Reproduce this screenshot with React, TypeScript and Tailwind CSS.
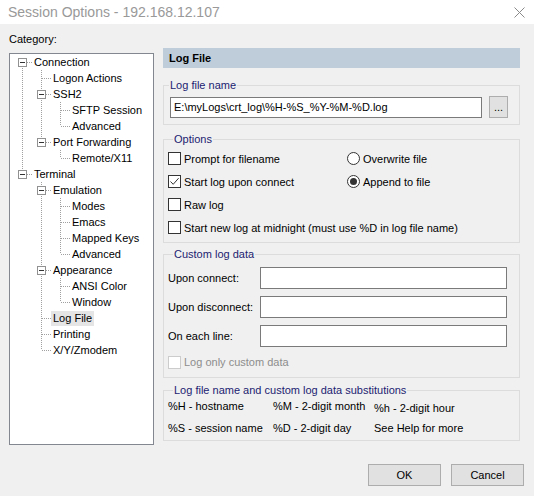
import React from 'react';

type TreeNode = {
  label: string;
  children?: TreeNode[];
  selected?: boolean;
};

const tree: TreeNode[] = [
  {
    label: 'Connection',
    children: [
      { label: 'Logon Actions' },
      { label: 'SSH2', children: [{ label: 'SFTP Session' }, { label: 'Advanced' }] },
      { label: 'Port Forwarding', children: [{ label: 'Remote/X11' }] },
    ],
  },
  {
    label: 'Terminal',
    children: [
      {
        label: 'Emulation',
        children: [{ label: 'Modes' }, { label: 'Emacs' }, { label: 'Mapped Keys' }, { label: 'Advanced' }],
      },
      { label: 'Appearance', children: [{ label: 'ANSI Color' }, { label: 'Window' }] },
      { label: 'Log File', selected: true },
      { label: 'Printing' },
      { label: 'X/Y/Zmodem' },
    ],
  },
];

type Row = {
  node: TreeNode;
  guides: boolean[];
  isFirst: boolean;
  isLast: boolean;
  isRoot: boolean;
};

const flatten = (nodes: TreeNode[], guides: boolean[], rows: Row[]) => {
  nodes.forEach((node, i) => {
    const isLast = i === nodes.length - 1;
    rows.push({ node, guides, isFirst: i === 0, isLast, isRoot: guides.length === 0 });
    if (node.children) flatten(node.children, [...guides, !isLast], rows);
  });
  return rows;
};

const DOT = '#a0a0a0';

// vertical guide for an ancestor that still has siblings below
const Guide = ({ on }: { on: boolean }) => (
  <svg width="19" height="16" className="shrink-0">
    {on && <line x1="9.5" y1="0" x2="9.5" y2="16" stroke={DOT} strokeDasharray="1 1" />}
  </svg>
);

const Connector = ({ row }: { row: Row }) => {
  const hasKids = !!row.node.children;
  const top = row.isRoot && row.isFirst ? 8 : 0;
  const bottom = row.isLast ? 8 : 16;
  return (
    <svg width="19" height="16" className="shrink-0">
      <line x1="9.5" y1={top} x2="9.5" y2={bottom} stroke={DOT} strokeDasharray="1 1" />
      <line x1={hasKids ? 14 : 10} y1="8.5" x2="19" y2="8.5" stroke={DOT} strokeDasharray="1 1" />
      {hasKids && (
        <>
          <rect x="5.5" y="4.5" width="8" height="8" fill="#fff" stroke="#919191" />
          <line x1="7" y1="8.5" x2="12" y2="8.5" stroke="#333" />
        </>
      )}
    </svg>
  );
};

const Tree = () => {
  const rows = flatten(tree, [], []);
  return (
    <div className="mt-[6px] h-[392px] border border-[#828790] bg-white pl-[3px]">
      {rows.map((row, i) => (
        <div key={i} className="flex h-4 items-center">
          {row.guides.map((g, j) => (
            <Guide key={j} on={g} />
          ))}
          <Connector row={row} />
          <span
            className={`px-[2px] leading-[15px] whitespace-nowrap ${row.node.selected ? 'bg-[#e5e5e5]' : ''}`}
          >
            {row.node.label}
          </span>
        </div>
      ))}
    </div>
  );
};

const Group = ({
  title,
  className,
  children,
}: {
  title: string;
  className: string;
  children: React.ReactNode;
}) => (
  <div className={`border border-[#dcdcdc] ${className}`}>
    <div className="-mt-[9px] ml-[5px] w-fit bg-[#f0f0f0] px-[1px] leading-[16px] whitespace-nowrap text-[#1c1c70]">
      {title}
    </div>
    {children}
  </div>
);

const Checkbox = ({ checked, disabled, label }: { checked?: boolean; disabled?: boolean; label: string }) => (
  <div className={`flex items-center gap-[3px] ${disabled ? 'text-[#8d8d8d]' : ''}`}>
    <span
      className={`flex h-[13px] w-[13px] shrink-0 items-center justify-center border bg-white ${
        disabled ? 'border-[#cccccc]' : 'border-[#333333]'
      }`}
    >
      {checked && (
        <svg width="11" height="11" viewBox="0 0 11 11">
          <path d="M1.5 5.5 L4.2 8.3 L9.6 2.2" fill="none" stroke="#333" strokeWidth="1" />
        </svg>
      )}
    </span>
    <span className="leading-[16px] whitespace-nowrap">{label}</span>
  </div>
);

const Radio = ({ checked, label }: { checked?: boolean; label: string }) => (
  <div className="flex items-center gap-[3px]">
    <span className="flex h-[13px] w-[13px] shrink-0 items-center justify-center rounded-full border border-[#333333] bg-white">
      {checked && <span className="h-[7px] w-[7px] rounded-full bg-[#333333]" />}
    </span>
    <span className="leading-[16px] whitespace-nowrap">{label}</span>
  </div>
);

const TextField = ({ value, className }: { value?: string; className: string }) => (
  <div className={`flex items-center border border-[#7a7a7a] bg-white px-[3px] ${className}`}>
    <span className="leading-[16px] whitespace-nowrap">{value}</span>
  </div>
);

const Button = ({ children, className = '' }: { children: React.ReactNode; className?: string }) => (
  <button className={`flex items-center justify-center border border-[#adadad] bg-[#e1e1e1] ${className}`}>
    {children}
  </button>
);

export default function App() {
  return (
    <div
      className="flex h-[496px] w-[534px] flex-col bg-[#f0f0f0] text-[11px] text-black"
      style={{ fontFamily: '"Liberation Sans", Arial, sans-serif' }}
    >
      {/* Title bar */}
      <div className="flex h-[24px] items-center justify-between bg-white pl-[8px] pr-[9px]">
        <span className="text-[14px] leading-[20px] whitespace-nowrap text-[#999999]">
          Session Options - 192.168.12.107
        </span>
        <svg width="11" height="11" viewBox="0 0 11 11">
          <path d="M0.5 0.5 L10.5 10.5 M10.5 0.5 L0.5 10.5" stroke="#8a8a8a" strokeWidth="1" />
        </svg>
      </div>

      <div className="flex gap-[9px] pl-[9px]">
        {/* Category tree */}
        <div className="w-[145px] pt-[7px]">
          <div className="leading-[16px]">Category:</div>
          <Tree />
        </div>

        {/* Log File page */}
        <div className="w-[357px] pt-[24px]">
          <div className="flex h-[20px] items-center bg-[#bfcddb] px-[6px] font-bold">Log File</div>

          <Group title="Log file name" className="mt-[17px] pb-[6px]">
            <div className="mt-[3px] flex items-center gap-[7px] pl-[6px]">
              <TextField value="E:\myLogs\crt_log\%H-%S_%Y-%M-%D.log" className="h-[21px] w-[312px]" />
              <Button className="h-[22px] w-[19px] leading-[10px]">...</Button>
            </div>
          </Group>

          <Group title="Options" className="mt-[14px] pb-[3px] pl-[4px]">
            <div className="grid grid-cols-[179px_1fr] grid-rows-[23px_23px_23px_23px] items-center">
              <Checkbox label="Prompt for filename" />
              <Radio label="Overwrite file" />
              <Checkbox label="Start log upon connect" checked />
              <Radio label="Append to file" checked />
              <Checkbox label="Raw log" />
              <span />
              <div className="col-span-2">
                <Checkbox label="Start new log at midnight (must use %D in log file name)" />
              </div>
            </div>
          </Group>

          <Group title="Custom log data" className="mt-[11px] pb-[7px] pl-[4px]">
            <div className="mt-[5px] flex flex-col gap-[7px]">
              {['Upon connect:', 'Upon disconnect:', 'On each line:'].map((label) => (
                <div key={label} className="flex items-center">
                  <span className="w-[92px] shrink-0 leading-[16px] whitespace-nowrap">{label}</span>
                  <TextField className="h-[22px] w-[247px]" />
                </div>
              ))}
            </div>
            <div className="mt-[7px]">
              <Checkbox label="Log only custom data" disabled />
            </div>
          </Group>

          <Group title="Log file name and custom log data substitutions" className="mt-[12px] pb-[4px] pl-[4px]">
            <div className="grid grid-cols-[105px_101px_1fr] gap-y-[4px] leading-[16px] whitespace-nowrap">
              <span>%H - hostname</span>
              <span>%M - 2-digit month</span>
              <span className="mt-[2px]">%h - 2-digit hour</span>
              <span>%S - session name</span>
              <span>%D - 2-digit day</span>
              <span>See Help for more</span>
            </div>
          </Group>
        </div>
      </div>

      {/* Dialog buttons */}
      <div className="mt-[19px] flex justify-end gap-[10px] pr-[10px]">
        <Button className="h-[22px] w-[73px]">OK</Button>
        <Button className="h-[22px] w-[73px]">Cancel</Button>
      </div>
    </div>
  );
}
